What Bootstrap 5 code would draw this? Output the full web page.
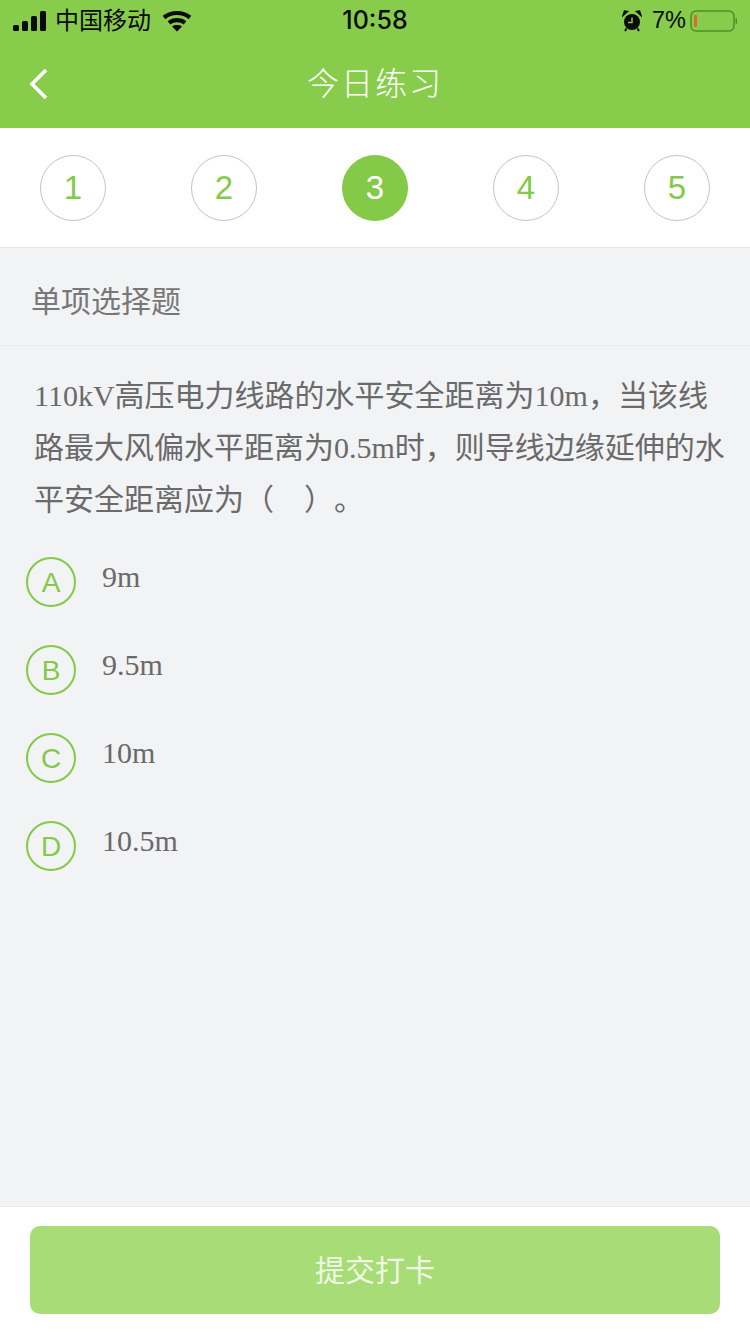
<!DOCTYPE html>
<html lang="zh-CN">
<head>
    <meta charset="UTF-8">
    <meta name="viewport" content="width=device-width, initial-scale=1">
    <title>今日练习</title>
    <link href="https://cdn.jsdelivr.net/npm/bootstrap@5.3.0/dist/css/bootstrap.min.css" rel="stylesheet">
    <style>
        html, body { height: 1334px; }
        body { width: 750px; background: #f2f3f5; font-family: "Liberation Sans", "Noto Sans CJK SC", sans-serif; overflow: hidden; }
        .screen { height: 1334px; }
        .top-green { background: #87cc4b; }
        .status-bar { height: 40px; padding: 2px 13px 0; color: #0a0a0a; font-size: 25px; }
        .status-side { width: 300px; }
        .carrier { font-size: 24px; line-height: 1; margin-left: 8px; }
        .wifi-icon { margin-left: 11px; }
        .clock { font-family: "Inter", "Liberation Sans", sans-serif; font-size: 25px; font-weight: 500; }
        .battery-pct { font-size: 23.5px; margin-left: 10px; margin-right: 4px; }
        .title-bar { height: 88px; }
        .title-text { color: #fff; font-size: 32px; letter-spacing: 2px; font-weight: 300; }
        .back-icon { position: absolute; left: 29px; top: 28px; }
        .step-row { height: 120px; padding: 27px 40px 0; background: #fff; border-bottom: 1px solid #e8e8e8; }
        .step-dot { width: 66px; height: 66px; border: 1px solid #c4c4c4; color: #85c949; font-size: 33px; font-weight: 300; }
        .step-dot.is-current { background: #85c949; border-color: #85c949; color: #fff; }
        .type-title { height: 98px; padding: 10px 0 0 31px; color: #777; font-size: 30px; border-bottom: 1px solid #e9eaec; }
        .question-text { padding: 24px 20px 0 34px; margin: 0; color: #6a6a6a; font-size: 30px; line-height: 52px; font-family: "Liberation Serif", "Noto Sans CJK SC", serif; text-spacing-trim: space-all; }
        .option-list { padding: 31px 0 0 26px; gap: 38px; }
        .option-mark { width: 50px; height: 50px; padding-top: 2px; border: 2px solid #85c949; color: #85c949; font-size: 28px; flex-shrink: 0; }
        .option-text { margin-left: 26px; color: #6a6a6a; font-size: 30px; line-height: 40px; font-family: "Liberation Serif", serif; }
        .footer-bar { height: 128px; padding: 19px 30px 0; background: #fff; border-top: 1px solid #e9e9e9; }
        .submit-btn { width: 100%; height: 88px; border: 0; border-radius: 10px; background: #a8dc76; color: #f0f8e6; font-size: 30px; }
    </style>
</head>
<body>
    <div class="screen d-flex flex-column">
        <!-- barra de estado y titulo -->
        <header class="top-green">
            <div class="status-bar d-flex align-items-center justify-content-between">
                <div class="status-side d-flex align-items-center">
                    <svg width="34" height="20" viewBox="0 0 34 20" fill="#0a0a0a">
                        <rect x="0" y="14" width="6" height="6" rx="1.5"/>
                        <rect x="9" y="10" width="6" height="10" rx="1.5"/>
                        <rect x="18" y="5" width="6" height="15" rx="1.5"/>
                        <rect x="27" y="0" width="6" height="20" rx="1.5"/>
                    </svg>
                    <span class="carrier">中国移动</span>
                    <svg class="wifi-icon" width="30" height="22" viewBox="0 0 30 22" fill="none" stroke="#0a0a0a" stroke-width="4.2">
                        <path d="M2 7.5C9.500 1.500 20.500 1.500 28 7.500"/>
                        <path d="M7 12.800C11.500 9.200 18.500 9.200 23 12.800"/>
                        <path d="M15 21.500L10 16.500C13 14.600 17 14.600 20 16.500Z" fill="#0a0a0a" stroke="none"/>
                    </svg>
                </div>
                <span class="clock">10:58</span>
                <div class="status-side d-flex align-items-center justify-content-end">
                    <svg width="20" height="22" viewBox="0 0 20 22">
                        <circle cx="10" cy="12" r="8" fill="#0a0a0a"/>
                        <path d="M10 7.500V12.500H6" fill="none" stroke="#87cc4b" stroke-width="1.500"/>
                        <path d="M1 5.500L5.500 1.500L2.500 1Z M19 5.500L14.500 1.500L17.500 1Z" fill="#0a0a0a" stroke="#0a0a0a" stroke-width="1.500"/>
                        <path d="M4.500 18.500L3 21M15.500 18.500L17 21" stroke="#0a0a0a" stroke-width="2"/>
                    </svg>
                    <span class="battery-pct">7%</span>
                    <svg width="47" height="24" viewBox="0 0 47 24">
                        <rect x="1" y="2" width="43" height="20" rx="5" fill="none" stroke="#4f8f2b" stroke-width="1.500"/>
                        <rect x="4" y="6" width="3" height="12" rx="1" fill="#e2682f"/>
                        <rect x="45.500" y="9" width="1.500" height="6" rx="0.700" fill="#4f8f2b"/>
                    </svg>
                </div>
            </div>
            <div class="title-bar position-relative d-flex align-items-center justify-content-center">
                <svg class="back-icon" width="20" height="32" viewBox="0 0 20 32" fill="none" stroke="#fff" stroke-width="3.600">
                    <path d="M17 2L3 16L17 30"/>
                </svg>
                <span class="title-text">今日练习</span>
            </div>
        </header>

        <!-- pasos -->
        <nav class="step-row d-flex justify-content-between align-items-start">
            <div class="step-dot rounded-circle d-flex align-items-center justify-content-center">1</div>
            <div class="step-dot rounded-circle d-flex align-items-center justify-content-center">2</div>
            <div class="step-dot is-current rounded-circle d-flex align-items-center justify-content-center">3</div>
            <div class="step-dot rounded-circle d-flex align-items-center justify-content-center">4</div>
            <div class="step-dot rounded-circle d-flex align-items-center justify-content-center">5</div>
        </nav>

        <!-- pregunta -->
        <main class="flex-grow-1">
            <div class="type-title d-flex align-items-center">单项选择题</div>
            <p class="question-text">110kV高压电力线路的水平安全距离为10m，当该线路最大风偏水平距离为0.5m时，则导线边缘延伸的水平安全距离应为（　）。</p>
            <div class="option-list d-flex flex-column">
                <div class="d-flex align-items-start">
                    <div class="option-mark rounded-circle d-flex align-items-center justify-content-center">A</div>
                    <div class="option-text">9m</div>
                </div>
                <div class="d-flex align-items-start">
                    <div class="option-mark rounded-circle d-flex align-items-center justify-content-center">B</div>
                    <div class="option-text">9.5m</div>
                </div>
                <div class="d-flex align-items-start">
                    <div class="option-mark rounded-circle d-flex align-items-center justify-content-center">C</div>
                    <div class="option-text">10m</div>
                </div>
                <div class="d-flex align-items-start">
                    <div class="option-mark rounded-circle d-flex align-items-center justify-content-center">D</div>
                    <div class="option-text">10.5m</div>
                </div>
            </div>
        </main>

        <footer class="footer-bar">
            <button type="button" class="btn submit-btn">提交打卡</button>
        </footer>
    </div>
    <script src="https://cdn.jsdelivr.net/npm/bootstrap@5.3.0/dist/js/bootstrap.bundle.min.js"></script>
</body>
</html>
